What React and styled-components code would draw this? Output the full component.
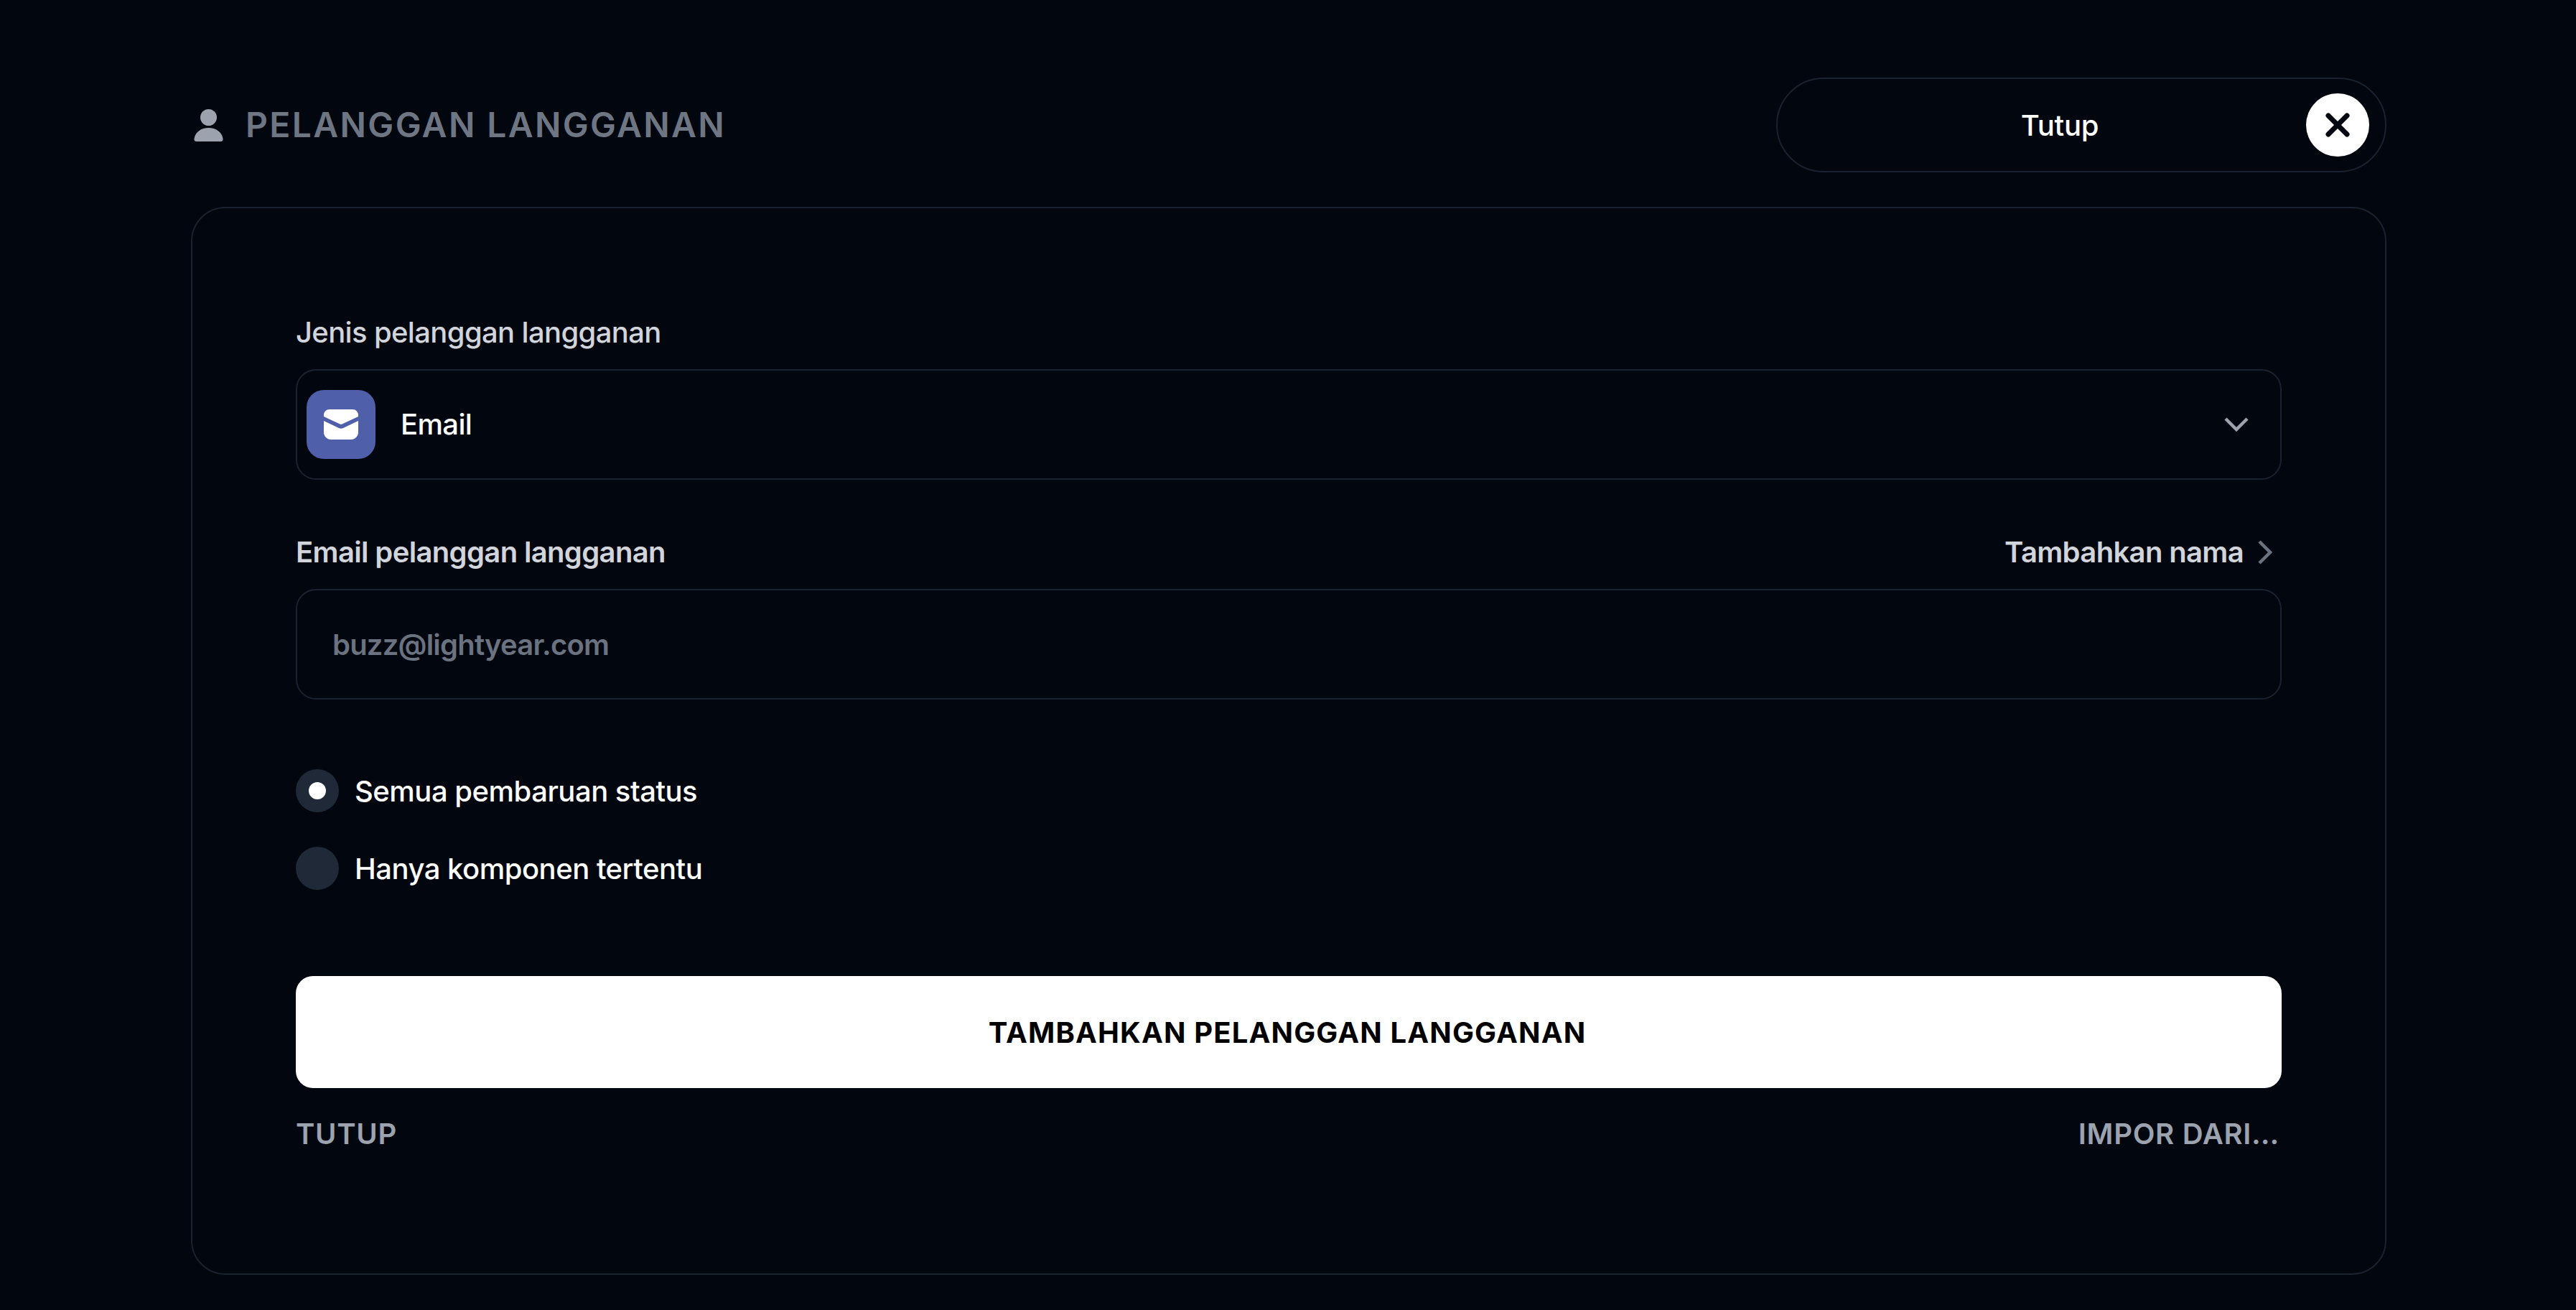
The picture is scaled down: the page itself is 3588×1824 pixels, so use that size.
import React from "react";
import styled, { createGlobalStyle } from "styled-components";

const Global = createGlobalStyle`
  html, body { margin: 0; padding: 0; background: #02060f; }
  * { box-sizing: border-box; }
  body { font-family: Inter, "Liberation Sans", sans-serif; -webkit-font-smoothing: antialiased; }
`;

const Page = styled.div`
  width: 3058px;
  height: 1824px;
  margin-left: 266px;
  padding-top: 108px;
  display: flex;
  flex-direction: column;
  gap: 48px;
`;

const Header = styled.header`
  display: flex;
  align-items: center;
  justify-content: space-between;
`;

const Title = styled.h1`
  margin: 0;
  display: flex;
  align-items: center;
  gap: 31px;
  font-size: 48px;
  line-height: 64px;
  font-weight: 600;
  letter-spacing: 2.36px;
  color: #6f7683;
`;

const PersonIcon = styled.svg`
  width: 41px;
  height: 45px;
  margin-left: 4px;
  fill: #9ca3af;
`;

const ClosePill = styled.button`
  position: relative;
  width: 850px;
  height: 132px;
  padding: 1px 60px 0 0;
  background: transparent;
  border: 2px solid #1a2230;
  border-radius: 66px;
  color: #fff;
  font: 500 40px/56px Inter, sans-serif;
  letter-spacing: -0.2px;
`;

const CloseCircle = styled.span`
  position: absolute;
  top: 20px;
  right: 22px;
  width: 88px;
  height: 88px;
  border-radius: 50%;
  background: #fff;
  display: flex;
  align-items: center;
  justify-content: center;
`;

const Card = styled.main`
  height: 1487px;
  border: 2px solid #1a2230;
  border-radius: 48px;
  padding: 145px 144px 0;
  display: flex;
  flex-direction: column;
`;

const FieldHead = styled.div`
  display: flex;
  align-items: center;
  justify-content: space-between;
  margin-top: ${(p) => p.$top || 0}px;
  margin-bottom: 23px;
`;

const Label = styled.label`
  font-size: 40px;
  line-height: 56px;
  font-weight: ${(p) => p.$weight || 500};
  letter-spacing: -0.65px;
  color: #d1d5db;
`;

const AddName = styled.span`
  display: flex;
  align-items: center;
  gap: 20px;
  padding-right: 13px;
  font-size: 40px;
  line-height: 56px;
  font-weight: 600;
  letter-spacing: -0.65px;
  color: #d1d5db;
`;

const Select = styled.div`
  height: 154px;
  border: 2px solid #1a2230;
  border-radius: 28px;
  padding: 0 44px 0 13px;
  display: flex;
  align-items: center;
`;

const AppIcon = styled.span`
  width: 96px;
  height: 96px;
  border-radius: 24px;
  background: #4f5fa9;
  display: flex;
  align-items: center;
  justify-content: center;
  margin-right: 35px;
`;

const SelectText = styled.span`
  flex: 1;
  font-size: 40px;
  line-height: 56px;
  font-weight: 500;
  letter-spacing: -0.65px;
  color: #fff;
`;

const Input = styled.div`
  height: 154px;
  border: 2px solid #1a2230;
  border-radius: 28px;
  padding: 2px 49px 0;
  display: flex;
  align-items: center;
  font-size: 40px;
  line-height: 56px;
  font-weight: 600;
  letter-spacing: -0.8px;
  color: #6b7280;
`;

const RadioGroup = styled.div`
  margin-top: 97px;
  display: flex;
  flex-direction: column;
  gap: 48px;
`;

const RadioRow = styled.div`
  display: flex;
  align-items: center;
  gap: 22px;
  height: 60px;
  font-size: 40px;
  line-height: 56px;
  font-weight: 500;
  letter-spacing: -0.5px;
  color: #fff;
`;

const RadioText = styled.span`
  padding-top: 2px;
`;

const RadioDot = styled.span`
  width: 60px;
  height: 60px;
  border-radius: 50%;
  background: #1f2937;
  display: flex;
  align-items: center;
  justify-content: center;
  &::after {
    content: "";
    width: 24px;
    height: 24px;
    border-radius: 50%;
    background: ${(p) => (p.$on ? "#fff" : "transparent")};
  }
`;

const Primary = styled.button`
  margin-top: 120px;
  height: 156px;
  padding: 1px 4px 0 0;
  border: 0;
  border-radius: 24px;
  background: #fff;
  color: #000;
  font: 700 40px/56px Inter, sans-serif;
  letter-spacing: 1.15px;
`;

const Footer = styled.div`
  margin-top: 36px;
  display: flex;
  justify-content: space-between;
  padding-right: 3px;
`;

const FooterLink = styled.span`
  font-size: 40px;
  line-height: 56px;
  font-weight: 600;
  letter-spacing: 0.7px;
  color: #9ca3af;
`;

export default function App() {
  return (
    <>
      <Global />
      <Page>
        <Header>
          <Title>
            <PersonIcon viewBox="0 0 41 45">
              <circle cx="20.5" cy="11.5" r="11.5" />
              <path d="M0.5 41C2 32 10 26 20.5 26S39 32 40.5 41C41 43.5 39.5 45 37.5 45H3.5C1.5 45 0 43.5 0.5 41Z" />
            </PersonIcon>
            PELANGGAN LANGGANAN
          </Title>
          <ClosePill>
            Tutup
            <CloseCircle>
              <svg width="34" height="34" viewBox="0 0 34 34" fill="none" stroke="#02060f" strokeWidth="7" strokeLinecap="round">
                <path d="M4 4L30 30M30 4L4 30" />
              </svg>
            </CloseCircle>
          </ClosePill>
        </Header>
        <Card>
          <FieldHead>
            <Label>Jenis pelanggan langganan</Label>
          </FieldHead>
          <Select>
            <AppIcon>
              <svg width="48" height="42" viewBox="0 0 48 42" fill="#fff">
                <path d="M0 10V8C0 3.5 3.5 0 8 0H40C44.5 0 48 3.500 48 8V10L26 20.200C24.600 20.900 23.400 20.900 22 20.200Z" />
                <path d="M0 16L21 26C23 27 25 27 27 26L48 16V32C48 37.500 43.500 42 38 42H10C4.500 42 0 37.500 0 32Z" />
              </svg>
            </AppIcon>
            <SelectText>Email</SelectText>
            <svg width="34" height="20" viewBox="0 0 34 20" fill="none" stroke="#9ca3af" strokeWidth="4.500">
              <path d="M2 2L17 17L32 2" />
            </svg>
          </Select>
          <FieldHead $top={73}>
            <Label $weight={600}>Email pelanggan langganan</Label>
            <AddName>
              Tambahkan nama
              <svg width="20" height="34" viewBox="0 0 20 34" fill="none" stroke="#6b7280" strokeWidth="4.500">
                <path d="M2 2L17 17L2 32" />
              </svg>
            </AddName>
          </FieldHead>
          <Input>buzz@lightyear.com</Input>
          <RadioGroup>
            <RadioRow>
              <RadioDot $on />
              <RadioText>Semua pembaruan status</RadioText>
            </RadioRow>
            <RadioRow>
              <RadioDot />
              <RadioText>Hanya komponen tertentu</RadioText>
            </RadioRow>
          </RadioGroup>
          <Primary>TAMBAHKAN PELANGGAN LANGGANAN</Primary>
          <Footer>
            <FooterLink>TUTUP</FooterLink>
            <FooterLink>IMPOR DARI…</FooterLink>
          </Footer>
        </Card>
      </Page>
    </>
  );
}
